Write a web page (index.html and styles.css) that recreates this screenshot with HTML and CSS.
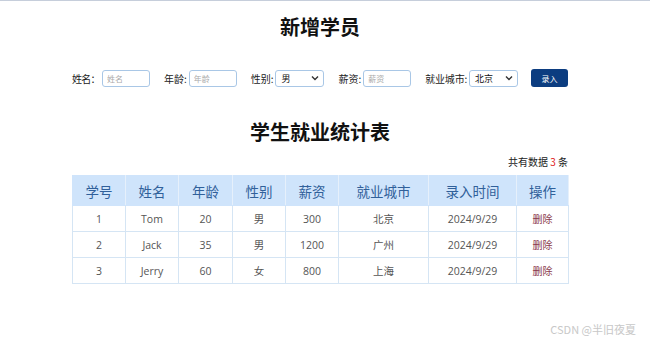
FILE: index.html
```html
<!DOCTYPE html>
<html lang="zh-CN">
<head>
<meta charset="utf-8">
<title>学生就业统计表</title>
<link rel="stylesheet" href="styles.css">
</head>
<body>
<div class="page">
  <h1 class="title">新增学员</h1>
  <form class="form">
    <label class="field"><span class="lbl lbl-first">姓名：</span><input class="inp" placeholder="姓名"></label>
    <label class="field"><span class="lbl">年龄:</span><input class="inp" placeholder="年龄"></label>
    <label class="field"><span class="lbl">性别:</span>
      <span class="sel"><span>男</span><svg width="8" height="6" viewBox="0 0 8 6"><path d="M1 1.5 L4 4.5 L7 1.5" fill="none" stroke="#333" stroke-width="1.4"/></svg></span></label>
    <label class="field"><span class="lbl">薪资:</span><input class="inp" placeholder="薪资"></label>
    <label class="field"><span class="lbl lbl-long">就业城市:</span>
      <span class="sel"><span>北京</span><svg width="8" height="6" viewBox="0 0 8 6"><path d="M1 1.5 L4 4.5 L7 1.5" fill="none" stroke="#333" stroke-width="1.4"/></svg></span></label>
    <button type="button" class="btn">录入</button>
  </form>
  <h2 class="title title2">学生就业统计表</h2>
  <div class="count">共有数据 <span class="num">3</span> 条</div>
  <table class="tbl">
    <colgroup>
      <col style="width:53px"><col style="width:53px"><col style="width:54px"><col style="width:53px"><col style="width:53px"><col style="width:90px"><col style="width:88px"><col style="width:52px">
    </colgroup>
    <thead>
      <tr><th>学号</th><th>姓名</th><th>年龄</th><th>性别</th><th>薪资</th><th>就业城市</th><th>录入时间</th><th>操作</th></tr>
    </thead>
    <tbody>
      <tr><td>1</td><td>Tom</td><td>20</td><td>男</td><td>300</td><td>北京</td><td>2024/9/29</td><td><a class="del">删除</a></td></tr>
      <tr><td>2</td><td>Jack</td><td>35</td><td>男</td><td>1200</td><td>广州</td><td>2024/9/29</td><td><a class="del">删除</a></td></tr>
      <tr><td>3</td><td>Jerry</td><td>60</td><td>女</td><td>800</td><td>上海</td><td>2024/9/29</td><td><a class="del">删除</a></td></tr>
    </tbody>
  </table>
</div>
<div class="wm">CSDN @半旧夜夏</div>
</body>
</html>
```
FILE: styles.css
```css
html, body {
  margin: 0;
  padding: 0;
  background: #fff;
}
body {
  border-top: 1px solid #c6cedb;
  font-family: "Open Sans", "Noto Sans CJK SC", sans-serif;
  color: #333;
  height: 342px;
  position: relative;
  overflow: hidden;
}
.page {
  width: 496px;
  margin-left: 72px;
}
.title {
  margin: 12px 0 0;
  font-size: 20px;
  line-height: 28px;
  font-weight: 700;
  text-align: center;
  color: #111;
  font-family: "Noto Sans CJK SC", sans-serif;
}
.title2 {
  margin-top: 30px;
}
.form {
  margin-top: 27px;
  height: 20px;
  display: flex;
  align-items: center;
  gap: 14px;
  font-family: "Noto Sans CJK SC", sans-serif;
}
.field {
  display: flex;
  align-items: center;
  gap: 2px;
  flex-shrink: 0;
}
.lbl {
  font-size: 10px;
  color: #222;
  white-space: nowrap;
}
.lbl-first {
  letter-spacing: -0.7px;
}
.lbl-long {
  letter-spacing: -0.2px;
}
.inp {
  box-sizing: border-box;
  width: 48px;
  height: 17px;
  border: 1px solid #a9c7e6;
  border-radius: 3px;
  padding: 0 4px;
  font-size: 8px;
  font-family: "Noto Sans CJK SC", sans-serif;
  outline: none;
  flex-shrink: 0;
}
.inp::placeholder {
  color: #aaa;
}
.sel {
  box-sizing: border-box;
  width: 49px;
  height: 17px;
  border: 1px solid #a9c7e6;
  border-radius: 3px;
  padding: 0 4px 0 5px;
  display: flex;
  align-items: center;
  justify-content: space-between;
  font-size: 9px;
  color: #111;
  flex-shrink: 0;
}
.btn {
  box-sizing: border-box;
  width: 37px;
  height: 18px;
  margin-left: -1px;
  border: none;
  border-radius: 3px;
  background: #0c3d80;
  color: #fff;
  font-size: 8px;
  font-family: "Noto Sans CJK SC", sans-serif;
  padding: 0;
  flex-shrink: 0;
}
.count {
  margin-top: 9px;
  text-align: right;
  font-size: 10px;
  line-height: 14px;
  color: #222;
  font-family: "Noto Sans CJK SC", sans-serif;
}
.num {
  color: #e02020;
}
.tbl {
  margin-top: 6px;
  width: 496px;
  border-collapse: collapse;
  table-layout: fixed;
}
.tbl th, .tbl td {
  border: 1px solid #d5e5f4;
  text-align: center;
  padding: 0;
}
.tbl th {
  height: 29px;
  background: #cfe4fb;
  color: #30609a;
  font-weight: 400;
  font-size: 13.5px;
  font-family: "Noto Sans CJK SC", sans-serif;
  border-color: #cfe4fb;
  border-right-color: #e6f0fb;
}
.tbl td {
  height: 25px;
  font-size: 10.5px;
  color: #555;
  font-family: "Open Sans", "Noto Sans CJK SC", sans-serif;
}
.del {
  color: #8a3a4c;
  font-size: 10px;
}
.wm {
  position: absolute;
  right: 14px;
  bottom: 6px;
  font-size: 11px;
  color: #c8c8c8;
  font-family: "Noto Sans CJK SC", sans-serif;
}
```
